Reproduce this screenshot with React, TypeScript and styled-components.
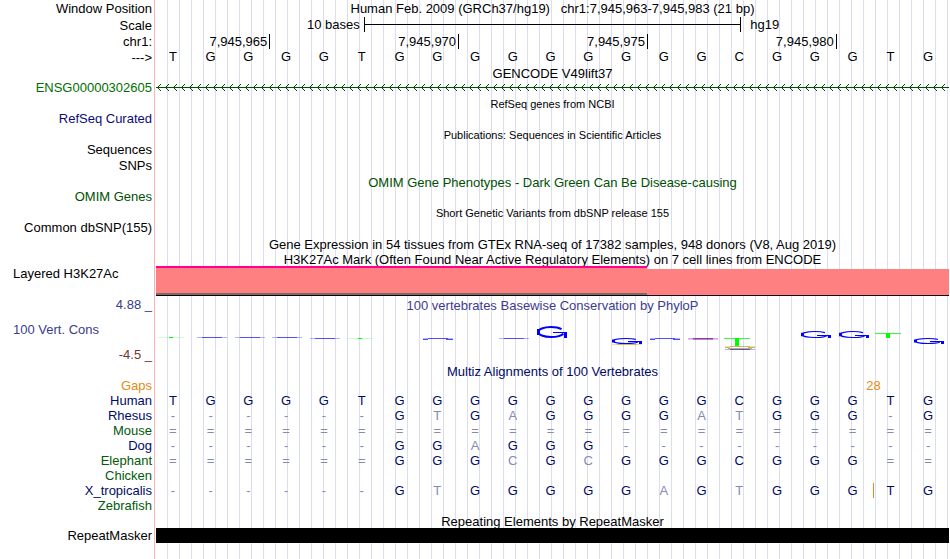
import React from 'react';
import styled, { createGlobalStyle } from 'styled-components';

const GlobalStyle = createGlobalStyle`
  body {
    margin: 0;
    background: #fff;
    color: #000;
    font-family: 'Liberation Sans', Arial, Helvetica, sans-serif;
    font-size: 13px;
    line-height: 15px;
  }
`;

const colors = {
  navy: '#000a64',
  refSeq: '#0c0c78',
  green: '#005a0a',
  gene: '#007000',
  omim: '#005000',
  phylo: '#3c3c8c',
  negative: '#783232',
  orange: '#e68a10',
  mismatch: '#858ab4',
};

const Browser = styled.main`
  box-sizing: border-box;
  min-height: 100vh;
  padding-right: 1px;
  background:
    linear-gradient(#ffb4b4, #ffb4b4) 154px 0 / 1px 100% no-repeat,
    repeating-linear-gradient(to right, transparent 0 11px, #dcdcfa 11px 12px) 156px 0 no-repeat;
`;

const Row = styled.div<{ $height?: number }>`
  display: grid;
  grid-template-columns: 154px minmax(0, 1fr);
  column-gap: 2px;
  align-items: end;
  height: ${(props) => props.$height ?? 15}px;
`;

const Label = styled.div<{ $color?: string }>`
  grid-column: 1;
  padding-right: 2px;
  text-align: right;
  white-space: nowrap;
  color: ${(props) => props.$color ?? '#000'};
`;

const SideLabel = styled(Label)`
  align-self: start;
  padding-left: 13px;
  text-align: left;
`;

const Title = styled.div<{ $color?: string; $small?: boolean }>`
  grid-column: 2;
  text-align: center;
  white-space: nowrap;
  font-size: ${(props) => (props.$small ? 11 : 13)}px;
  line-height: 13px;
  color: ${(props) => props.$color ?? '#000'};
`;

const WindowTitle = styled(Title)`
  align-self: center;
`;

const Scale = styled.div`
  display: grid;
  grid-template-columns: 11fr 20fr 11fr;
  align-items: center;
  height: 17px;
`;

const ScaleText = styled.span<{ $end?: boolean }>`
  padding: 0 4px 0 9px;
  text-align: ${(props) => (props.$end ? 'left' : 'right')};
`;

const ScaleBar = styled.div`
  display: flex;
  align-items: center;
  height: 15px;
  border: solid #000;
  border-width: 0 1px;

  &::before {
    content: '';
    flex: 1;
    height: 1px;
    background: #000;
  }
`;

const Bases = styled.div`
  display: grid;
  grid-template-columns: repeat(21, minmax(0, 1fr));
`;

const Position = styled.div<{ $from: number; $to: number }>`
  grid-column: ${(props) => props.$from} / ${(props) => props.$to};
  margin-right: -1px;
  padding-right: 2px;
  border-right: 1px solid #000;
  text-align: right;
`;

const Base = styled.span`
  padding-right: 4px;
  text-align: center;
`;

const Sequence = styled(Bases)`
  align-self: start;
`;

const Chart = styled.svg`
  display: block;
  width: 100%;
`;

const WiggleLabels = styled.div`
  box-sizing: border-box;
  display: flex;
  flex-direction: column;
  justify-content: space-between;
  height: 100%;
  padding: 10px 0 1px;
`;

const Alignment = styled.table`
  display: block;

  tbody {
    display: block;
  }
`;

const SpeciesRow = styled.tr`
  display: grid;
  grid-template-columns: 156px repeat(21, minmax(0, 1fr));
  height: 15px;
`;

const SpeciesName = styled.th<{ $color: string }>`
  padding: 0 4px 0 0;
  font-weight: normal;
  text-align: right;
  color: ${(props) => props.$color};
`;

const AlignedBase = styled.td<{ $match: boolean; $insert: boolean }>`
  padding: 0 4px 0 0;
  text-align: center;
  color: ${(props) => (props.$match ? colors.navy : colors.mismatch)};
  box-shadow: ${(props) => (props.$insert ? `inset 1px 0 ${colors.orange}` : 'none')};
`;

const GapSize = styled.td`
  grid-column: 20 / span 2;
  padding: 0;
  text-align: center;
  color: ${colors.orange};
`;

const RepeatBlock = styled.div`
  height: 15px;
  background: #000;
`;

const REFERENCE = 'TGGGGTGGGGGGGGGCGGGTG';

const positions = [
  { from: 1, to: 4, text: '7,945,965' },
  { from: 4, to: 9, text: '7,945,970' },
  { from: 9, to: 14, text: '7,945,975' },
  { from: 14, to: 19, text: '7,945,980' },
];

interface SpeciesData {
  name: string;
  color: string;
  bases: string;
  insertAt?: number;
}

const species: SpeciesData[] = [
  { name: 'Human', color: colors.navy, bases: REFERENCE },
  { name: 'Rhesus', color: colors.navy, bases: '------GTGAGGGGATGGG-G' },
  { name: 'Mouse', color: colors.green, bases: '=====================' },
  { name: 'Dog', color: colors.navy, bases: '------GGAGGG---------' },
  { name: 'Elephant', color: colors.green, bases: '======GGGCGCGGGCGGG==' },
  { name: 'Chicken', color: colors.green, bases: '' },
  { name: 'X_tropicalis', color: colors.navy, bases: '------GTGGGGGAGTGGGTG', insertAt: 19 },
  { name: 'Zebrafish', color: colors.green, bases: '' },
];

interface Mark {
  col: number;
  kind: 'round' | 'stem' | 'line';
  y: number;
  h: number;
  color: string;
}

const BLUE = '#0000fe';
const GREEN = '#00fe00';
const OLIVE = '#b4a000';

// conservation score per base, y grows down and 26 is the zero line
const marks: Mark[] = [
  { col: 0, kind: 'stem', y: 25, h: 1, color: GREEN },
  { col: 1, kind: 'line', y: 25, h: 1, color: BLUE },
  { col: 2, kind: 'line', y: 25, h: 1, color: BLUE },
  { col: 3, kind: 'line', y: 25, h: 1, color: BLUE },
  { col: 4, kind: 'line', y: 26, h: 1, color: BLUE },
  { col: 5, kind: 'stem', y: 26, h: 1, color: GREEN },
  { col: 7, kind: 'line', y: 26, h: 2, color: BLUE },
  { col: 9, kind: 'line', y: 26, h: 1, color: BLUE },
  { col: 10, kind: 'round', y: 14, h: 12, color: BLUE },
  { col: 12, kind: 'round', y: 26, h: 6, color: BLUE },
  { col: 12, kind: 'line', y: 32, h: 1, color: OLIVE },
  { col: 13, kind: 'line', y: 26, h: 2, color: BLUE },
  { col: 14, kind: 'line', y: 26, h: 1, color: BLUE },
  { col: 14, kind: 'line', y: 27, h: 1, color: '#ff3030' },
  { col: 15, kind: 'stem', y: 26, h: 8, color: GREEN },
  { col: 15, kind: 'line', y: 34, h: 3, color: OLIVE },
  { col: 15, kind: 'line', y: 37, h: 1, color: BLUE },
  { col: 17, kind: 'round', y: 19, h: 7, color: BLUE },
  { col: 18, kind: 'round', y: 19, h: 7, color: BLUE },
  { col: 19, kind: 'stem', y: 21, h: 5, color: GREEN },
  { col: 20, kind: 'round', y: 26, h: 6, color: BLUE },
];

function ScoreMark({ col, kind, y, h, color }: Mark) {
  const x = Math.round((col * 793) / 21);

  if (kind === 'stem') {
    return (
      <g fill={color}>
        <rect x={x + 2} y={y} width='26' height='1' opacity={h === 1 ? 0.2 : 0.8} />
        <rect x={x + 13} y={y} width='4' height={h} />
      </g>
    );
  }

  if (kind === 'line') {
    return (
      <g fill={color}>
        <rect x={x + 8} y={y} width='20' height='1' opacity='0.55' />
        <rect x={x + 3} y={y} width='30' height='1' opacity='0.3' />
        {h > 1 && <rect x={x + 3} y={y + 1} width='5' height='1' opacity='0.7' />}
        {h > 1 && <rect x={x + 26} y={y + 1} width='7' height='1' opacity='0.7' />}
        {h > 2 && <rect x={x + 6} y={y + 2} width='24' height='1' opacity='0.75' />}
      </g>
    );
  }

  // open ring with a shelf on its right side
  const tall = h > 8;
  const middle = y + Math.round(h / 2);
  return (
    <g>
      <ellipse
        cx={x + 17}
        cy={y + h / 2}
        rx='13'
        ry={h / 2 - (tall ? 1 : 0.5)}
        fill='none'
        stroke={color}
        strokeWidth={tall ? 2 : 1.2}
        pathLength='100'
        strokeDasharray='0 3 90 7'
      />
      <rect x={x + 3} y={y + h / 4} width='3' height={h / 2} fill={color} />
      <rect x={x + 19} y={middle} width='14' height='1' fill={color} />
      <rect x={x + 30} y={middle} width='3' height={Math.floor(h / 2)} fill={color} />
    </g>
  );
}

function GeneLine() {
  return (
    <Chart height='15' shapeRendering='crispEdges' aria-hidden='true'>
      <defs>
        <pattern id='strand' width='8' height='15' patternUnits='userSpaceOnUse'>
          <path d='M1 7h1v1h-1zM2 6h1v1h-1zM3 5h1v1h-1zM4 4h1v1h-1zM2 8h1v1h-1zM3 9h1v1h-1zM4 10h1v1h-1z' fill='#005000' />
        </pattern>
      </defs>
      <rect width='100%' height='15' fill='url(#strand)' />
      <rect y='7' width='100%' height='1' fill='#005000' />
    </Chart>
  );
}

function App() {
  return (
    <React.Fragment>
      <GlobalStyle />
      <Browser>
        <Row $height={16}>
          <Label>Window Position</Label>
          <WindowTitle>Human Feb. 2009 (GRCh37/hg19)&nbsp;&nbsp; chr1:7,945,963-7,945,983 (21 bp)</WindowTitle>
        </Row>
        <Row $height={17}>
          <Label>Scale</Label>
          <Scale>
            <ScaleText>10 bases</ScaleText>
            <ScaleBar />
            <ScaleText $end>hg19</ScaleText>
          </Scale>
        </Row>
        <Row $height={16}>
          <Label>chr1:</Label>
          <Bases>
            {positions.map(({ from, to, text }) => (
              <Position key={text} $from={from} $to={to}>
                {text}
              </Position>
            ))}
          </Bases>
        </Row>
        <Row $height={16}>
          <Label>---&gt;</Label>
          <Sequence>
            {REFERENCE.split('').map((base, index) => (
              <Base key={index}>{base}</Base>
            ))}
          </Sequence>
        </Row>

        <Row>
          <Title>GENCODE V49lift37</Title>
        </Row>
        <Row>
          <Label $color={colors.gene}>ENSG00000302605</Label>
          <GeneLine />
        </Row>

        <Row $height={16}>
          <Title $small>RefSeq genes from NCBI</Title>
        </Row>
        <Row>
          <Label $color={colors.refSeq}>RefSeq Curated</Label>
        </Row>

        <Row $height={16}>
          <Title $small>Publications: Sequences in Scientific Articles</Title>
        </Row>
        <Row>
          <Label>Sequences</Label>
        </Row>
        <Row $height={16}>
          <Label>SNPs</Label>
        </Row>

        <Row $height={16}>
          <Title $color={colors.omim}>OMIM Gene Phenotypes - Dark Green Can Be Disease-causing</Title>
        </Row>
        <Row>
          <Label $color={colors.omim}>OMIM Genes</Label>
        </Row>

        <Row $height={16}>
          <Title $small>Short Genetic Variants from dbSNP release 155</Title>
        </Row>
        <Row>
          <Label>Common dbSNP(155)</Label>
        </Row>

        <Row $height={16}>
          <Title>Gene Expression in 54 tissues from GTEx RNA-seq of 17382 samples, 948 donors (V8, Aug 2019)</Title>
        </Row>
        <Row>
          <Title>H3K27Ac Mark (Often Found Near Active Regulatory Elements) on 7 cell lines from ENCODE</Title>
        </Row>
        <Row $height={30}>
          <SideLabel>Layered H3K27Ac</SideLabel>
          <Chart height='30' viewBox='0 0 793 30' preserveAspectRatio='none' aria-hidden='true'>
            <rect y='3' width='793' height='26' fill='#ff8080' />
            <rect y='2' width='491' height='1' fill='#ff8080' />
            <rect width='491' height='2' fill='#ff0090' />
            <rect y='27' width='491' height='2' fill='#78705f' />
            <rect y='29' width='793' height='1' fill='#100020' />
          </Chart>
        </Row>

        <Row $height={16}>
          <Label $color={colors.phylo}>4.88 _</Label>
          <Title $color={colors.phylo}>100 vertebrates Basewise Conservation by PhyloP</Title>
        </Row>
        <Row $height={51}>
          <WiggleLabels>
            <SideLabel $color={colors.phylo}>100 Vert. Cons</SideLabel>
            <Label $color={colors.negative}>-4.5 _</Label>
          </WiggleLabels>
          <Chart height='51' viewBox='0 0 793 51' preserveAspectRatio='none' aria-hidden='true'>
            {marks.map((mark, index) => (
              <ScoreMark key={index} {...mark} />
            ))}
          </Chart>
        </Row>

        <Row>
          <Title $color={colors.navy}>Multiz Alignments of 100 Vertebrates</Title>
        </Row>
        <Alignment>
          <tbody>
            <SpeciesRow>
              <SpeciesName $color={colors.orange} scope='row'>
                Gaps
              </SpeciesName>
              <GapSize>28</GapSize>
            </SpeciesRow>
            {species.map(({ name, color, bases, insertAt }) => (
              <SpeciesRow key={name}>
                <SpeciesName $color={color} scope='row'>
                  {name}
                </SpeciesName>
                {bases.split('').map((base, index) => (
                  <AlignedBase key={index} $match={base === REFERENCE[index]} $insert={index === insertAt}>
                    {base}
                  </AlignedBase>
                ))}
              </SpeciesRow>
            ))}
          </tbody>
        </Alignment>

        <Row>
          <Title>Repeating Elements by RepeatMasker</Title>
        </Row>
        <Row>
          <Label>RepeatMasker</Label>
          <RepeatBlock />
        </Row>
      </Browser>
    </React.Fragment>
  );
}

export default App;
